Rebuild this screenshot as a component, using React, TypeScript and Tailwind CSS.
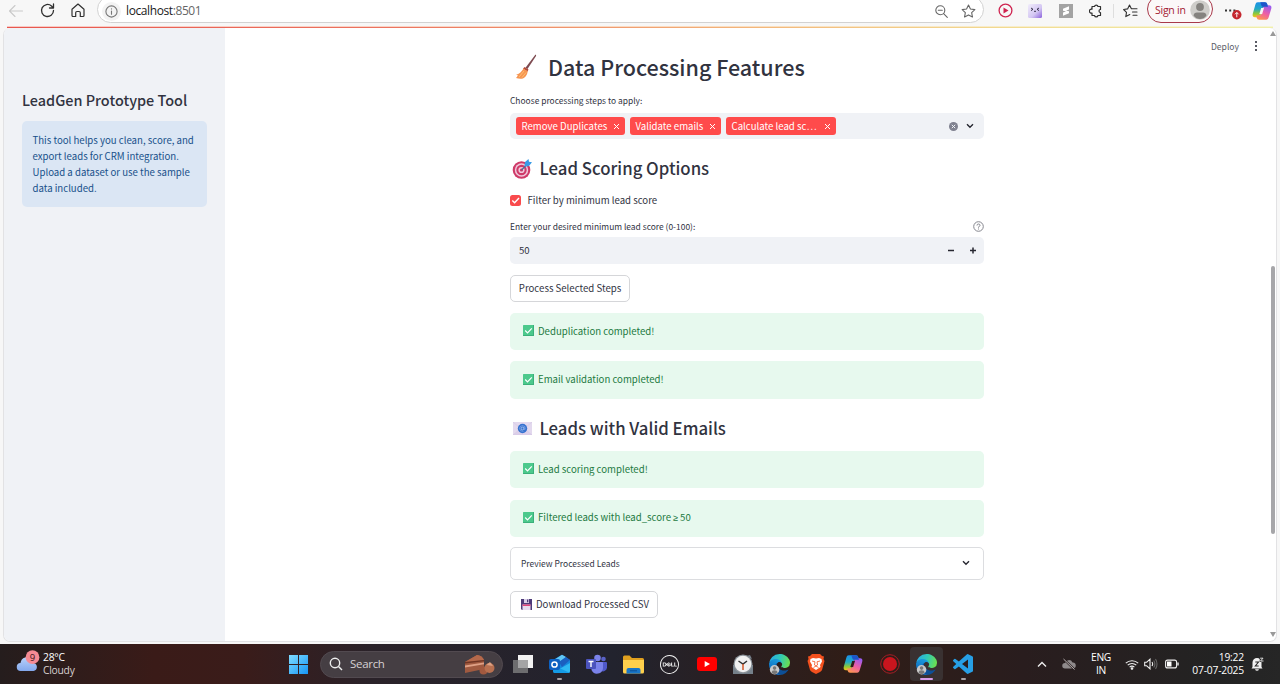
import React from "react";
import { SiDell } from "react-icons/si";

const UI = "font-['Open_Sans','Noto_Sans',sans-serif]";
const APP = "font-['Noto_Sans_CJK_SC','Noto_Sans',sans-serif]";

function Slot({ className, children }: { className: string; children?: React.ReactNode }) {
  return <div className={`flex shrink-0 items-center justify-center ${className}`}>{children}</div>;
}

function Copilot({ id, size, hole }: { id: string; size: number; hole: string }) {
  return (
    <svg width={size} height={size} viewBox="0 0 24 24">
      <defs>
        <linearGradient id={`${id}a`} x1="0.3" y1="0" x2="0.3" y2="1">
          <stop offset="0" stopColor="#1b8fe8" />
          <stop offset="0.45" stopColor="#22aac4" />
          <stop offset="0.75" stopColor="#8cc83c" />
          <stop offset="1" stopColor="#f5c518" />
        </linearGradient>
        <linearGradient id={`${id}b`} x1="0.7" y1="0" x2="0.2" y2="1">
          <stop offset="0" stopColor="#9a5cf0" />
          <stop offset="0.5" stopColor="#ee5fa5" />
          <stop offset="1" stopColor="#ff9a4a" />
        </linearGradient>
      </defs>
      <path d="M7 1.500h8.500c1.600 0 2.400 1 2.800 2.400l.9 3.100h-3.400c-1.800 0-2.800 1-3.300 2.700l-2.200 7.400c-.4 1.400-1.200 2.400-2.800 2.400H3.600C1 19.500.2 17.500 1 15L4 4.500C4.500 2.500 5.300 1.500 7 1.500z" fill={`url(#${id}a)`} />
      <path d="M17 22.500H8.500c-1.600 0-2.400-1-2.800-2.400L4.900 17.500h3.300c1.800 0 2.800-1 3.300-2.700l2.200-7.400c.4-1.400 1.200-2.400 2.800-2.400h3.900c2.600 0 3.400 2 2.600 4.500L20 19.500c-.5 2-1.300 3-3 3z" fill={`url(#${id}b)`} />
      <path d="M10 1.500h5.500c1.600 0 2.400 1 2.800 2.400l.9 3.100h-5.700c-1.400 0-2-.8-2.400-2.100z" fill="#1d55c9" />
      <path d="M11 8.500h3.400l-2.200 7H8.800z" fill={hole} />
    </svg>
  );
}

function Edge({ id }: { id: string }) {
  return (
    <svg width="21" height="21" viewBox="0 0 256 256">
      <defs>
        <linearGradient id={`${id}g`} x1="0" y1="0.3" x2="1" y2="0.5">
          <stop offset="0" stopColor="#2aa9e8" />
          <stop offset="0.5" stopColor="#2fc9b8" />
          <stop offset="1" stopColor="#6be04f" />
        </linearGradient>
        <linearGradient id={`${id}b`} x1="0.7" y1="0" x2="0.3" y2="1">
          <stop offset="0" stopColor="#1ba2e0" />
          <stop offset="1" stopColor="#0d5fb8" />
        </linearGradient>
      </defs>
      <path fill="#0d4f97" d="M231 190.500c-3.400 1.800-6.900 3.400-10.500 4.700a101.600 101.600 0 0 1-35.800 6.500c-47.200 0-88.300-32.500-88.300-74.100a31.500 31.500 0 0 1 16.400-27.300c-42.700 1.800-53.700 46.300-53.700 72.300 0 73.800 68 81.200 82.600 81.200 7.900 0 19.800-2.300 27-4.600l1.300-.4a128.300 128.300 0 0 0 66.600-52.700 4 4 0 0 0-5.600-5.600z" />
      <path fill={`url(#${id}b)`} d="M105.700 241.400a79.200 79.200 0 0 1-22.700-21.300 80.700 80.700 0 0 1 29.800-120c3.200-1.500 8.500-4.100 15.600-4a32.400 32.400 0 0 1 25.700 13 31.900 31.900 0 0 1 6.300 18.700c0-.2 24.500-79.600-80-79.600-43.900 0-80 41.700-80 78.200a130.200 130.200 0 0 0 12.100 56 128 128 0 0 0 156.400 67 75.500 75.500 0 0 1-62.800-8z" />
      <path fill={`url(#${id}g)`} d="M152.300 148.900c-.8 1-3.300 2.500-3.300 5.700 0 2.600 1.700 5.100 4.700 7.200 14.400 10 41.500 8.700 41.600 8.700a59.600 59.600 0 0 0 30.300-8.300A61.400 61.400 0 0 0 256 109.200c.3-22.400-8-37.300-11.300-43.900C223.500 23.900 177.700 0 128 0A128 128 0 0 0 0 126.200c.5-36.500 36.800-66 80-66 3.500 0 23.500.3 42 10a72.600 72.600 0 0 1 30.900 29.300c6.100 10.600 7.200 24.100 7.200 29.500s-2.700 13.300-7.800 19.900z" />
      <circle cx="68" cy="192" r="58" fill="#c9c9c9" />
      <circle cx="68" cy="172" r="22" fill="#777" />
      <path d="M30 225q4-26 38-26t38 26q-16 20-38 20t-38-20z" fill="#777" />
    </svg>
  );
}

function Toolbar() {
  const line = { fill: "none", stroke: "#303030", strokeWidth: 1.1, strokeLinecap: "round", strokeLinejoin: "round" } as const;
  return (
    <div className={`flex h-[26px] w-full shrink-0 overflow-hidden bg-[#f7f7f7] ${UI}`}>
      <div className="flex h-[21px] items-center">
        <Slot className="w-8">
          <svg width="16" height="14" viewBox="0 0 16 14" {...line} stroke="#c9c9c9"><path d="M14.500 7H1.500M7 1.500 1.500 7 7 12.500" /></svg>
        </Slot>
        <Slot className="w-[30px]">
          <svg width="15" height="15" viewBox="0 0 15 15" {...line} strokeWidth={1.3}><path d="M13.500 7.500a6 6 0 1 1-2-4.500l1.500 1.500M13.500 1v4h-4" /></svg>
        </Slot>
        <Slot className="w-[31px]">
          <svg width="14" height="15" viewBox="0 0 14 15" {...line} strokeWidth={1.2}><path d="M1 6.200 7 1l6 5.200v6.300a1 1 0 0 1-1 1H9.300V9.800A1.300 1.300 0 0 0 8 8.500H6a1.300 1.300 0 0 0-1.300 1.300v3.700H2a1 1 0 0 1-1-1z" /></svg>
        </Slot>
      </div>
      <div className="-mt-[4px] ml-[4px] flex h-[27px] w-[887px] shrink-0 items-center rounded-full border border-[#d2d2d2] bg-white pt-[3px]">
        <Slot className="w-[27px]">
          <div className="flex h-[19px] w-[19px] items-center justify-center rounded-full bg-[#f3f3f3]">
            <svg width="13" height="13" viewBox="0 0 13 13" {...line} stroke="#777"><circle cx="6.500" cy="6.500" r="5.600" /><path d="M6.500 6v3.200M6.500 3.800v.1" /></svg>
          </div>
        </Slot>
        <span className="ml-[1px] text-[12px] leading-[16px] tracking-[-0.4px] whitespace-nowrap text-[#1a1a1a]">localhost<span className="text-[#666]">:8501</span></span>
        <Slot className="ml-auto w-[27px]">
          <svg width="13" height="13" viewBox="0 0 13 13" {...line} stroke="#666"><circle cx="5.300" cy="5.300" r="4.500" /><path d="M8.600 8.600 12.300 12.300M3.300 5.300h4" /></svg>
        </Slot>
        <Slot className="mr-[1px] w-[27px]">
          <svg width="15" height="14" viewBox="0 0 15 14" {...line} stroke="#666"><path d="m7.500 1 1.950 4 4.400.6-3.200 3.050.8 4.350-3.950-2.100L3.550 13l.8-4.350L1.150 5.600l4.400-.6z" /></svg>
        </Slot>
      </div>
      <div className="ml-[6px] flex h-[21px] items-center">
        <Slot className="w-[30px]">
          <svg width="15" height="15" viewBox="0 0 15 15"><circle cx="7.500" cy="7.500" r="6.400" fill="none" stroke="#cf2450" strokeWidth="1.300" /><path d="M5.500 4.500v6l5-3z" fill="#cf2450" /></svg>
        </Slot>
        <Slot className="w-[30px]">
          <svg width="14" height="14" viewBox="0 0 14 14">
            <defs><linearGradient id="face" x1="0" y1="0" x2="1" y2="1"><stop offset="0" stopColor="#f1ecfb" /><stop offset="0.6" stopColor="#d3c6f2" /><stop offset="1" stopColor="#8b62dc" /></linearGradient></defs>
            <rect width="14" height="14" rx="1.500" fill="url(#face)" />
            <path d="m3 4 2 1.300-2 1.300M11 4 9 5.300l2 1.300M6 7.300h2" fill="none" stroke="#28233c" strokeWidth="0.900" />
          </svg>
        </Slot>
        <Slot className="w-[31px]">
          <svg width="14" height="14" viewBox="0 0 14 14"><rect width="14" height="14" fill="#a3a3a3" /><path d="m10 2.300-6 2.400v2l3 .5-3 1.200v3.300l6-2.400v-2L7 6.800l3-1.200z" fill="#fff" /></svg>
        </Slot>
        <Slot className="w-[30px]">
          <svg width="14" height="14" viewBox="0 0 14 14" {...line} strokeWidth={1.2}><path d="M3 2.500h2.500a1.800 1.800 0 0 1 3.500 0h2.500v3a1.500 1.500 0 0 0 0 3v3H9a1.800 1.800 0 0 1-3.500 0H3V9a2 2 0 1 1 0-3.800z" /></svg>
        </Slot>
        <div className="ml-[2px] h-[14px] w-px bg-[#dedede]" />
        <Slot className="ml-[2px] w-[29px]">
          <svg width="15" height="14" viewBox="0 0 15 14" {...line}><path d="M10 4.800H8.400L6.500 1 4.600 4.900l-4 .6 2.900 2.900-.7 4.200 4-2.100M10 4.800h4M9.500 8h4.500M10 11.200h4" /></svg>
        </Slot>
      </div>
      <div className="-mt-[5px] ml-[2px] flex h-[28px] w-[66px] shrink-0 items-center rounded-full border border-[#a8394a] bg-[#fbf8f8] pt-[2px] pl-[7px]">
        <span className="text-[10.500px] leading-[14px] tracking-[-0.25px] whitespace-nowrap text-[#a32033]">Sign in</span>
        <svg className="mr-[2px] ml-auto" width="20" height="20" viewBox="0 0 20 20"><circle cx="10" cy="10" r="9.800" fill="#cfcdca" /><circle cx="10" cy="7" r="3.900" fill="#85827f" /><path d="M3.500 15.500q.5-3 3.500-3h6q3 0 3.500 3-2.500 3.600-6.500 3.600t-6.500-3.600z" fill="#85827f" /></svg>
      </div>
      <Slot className="ml-[10px] h-[21px] w-[20px]">
        <svg width="20" height="20" viewBox="0 0 20 20"><path d="M2 8.500h2v2H2zM6.200 8.500h2v2h-2zM10.400 8.500h2v2h-2z" fill="#333" /><circle cx="13.800" cy="13.800" r="4.700" fill="#c4262e" /><path d="M13.800 16.300v-4.800M12 13.300l1.800-1.800 1.800 1.800" fill="none" stroke="#fff" strokeWidth="1" /></svg>
      </Slot>
      <Slot className="ml-[9px] h-[21px] w-[20px]"><Copilot id="top" size={20} hole="#f7f7f7" /></Slot>
    </div>
  );
}

function Check() {
  return (
    <svg className="mr-[4.500px] shrink-0" width="11" height="11" viewBox="0 0 11 11">
      <rect width="11" height="11" rx=".5" fill="#4cc98c" />
      <path d="M0 10.500h11M10.500 0v11" stroke="#3bb07a" />
      <path d="M2.200 5.500 4.500 7.800 8.800 3.300" fill="none" stroke="#fff" strokeWidth="1.200" />
    </svg>
  );
}

function Alert({ className, children }: { className: string; children: React.ReactNode }) {
  return (
    <div className={`flex shrink-0 items-center rounded-[5px] bg-[#e7f9ee] pb-[2px] pl-[12.500px] text-[9.620px] leading-[14px] whitespace-nowrap text-[#1c7a3f] ${className}`}>
      <Check /><span>{children}</span>
    </div>
  );
}

function Tag({ className, children }: { className: string; children: React.ReactNode }) {
  return (
    <div className={`flex h-[18.500px] shrink-0 items-center rounded-[3px] bg-[#ff4b4b] pb-[1px] pl-[5.500px] text-[9.650px] leading-[14px] whitespace-nowrap text-white ${className}`}>
      {children}
      <svg className="mt-px mr-[5px] ml-auto" width="7" height="7" viewBox="0 0 7 7"><path d="m1 1 5 5M6 1 1 6" stroke="#fff" strokeWidth="1" /></svg>
    </div>
  );
}

function Chevron() {
  return <svg width="8" height="6" viewBox="0 0 8 6"><path d="m1 1.200 3 3 3-3" fill="none" stroke="#262730" strokeWidth="1.400" /></svg>;
}

function Sidebar() {
  return (
    <aside className="flex w-[221px] shrink-0 flex-col bg-[#f0f2f6] pl-[18px]">
      <h2 className="mt-[62px] h-[20px] text-[14.450px] leading-[20px] font-medium whitespace-nowrap text-[#31333f]">LeadGen Prototype Tool</h2>
      <div className="mt-[11px] h-[86px] w-[185px] rounded-[5px] bg-[#dbe6f4] pt-[10.500px] pl-[10.500px] text-[9.650px] leading-[16.200px] whitespace-nowrap text-[#17508a]">
        <p>This tool helps you clean, score, and</p>
        <p>export leads for CRM integration.</p>
        <p>Upload a dataset or use the sample</p>
        <p>data included.</p>
      </div>
    </aside>
  );
}

function Content() {
  return (
    <div className="ml-[285px] flex w-[474px] shrink-0 flex-col text-[#31333f]">
      <h1 className="mt-[19px] flex h-[40px] shrink-0 items-center pl-[5px] text-[21.500px] leading-[40px] font-medium whitespace-nowrap">
        <svg className="mr-[11px]" width="22" height="26" viewBox="0 0 22 26">
          <path d="M20.500.5q1 .5.5 1.500l-8.500 13-2-1.300z" fill="#7d4a50" />
          <path d="m9.500 13 4 2.600-1 2-4.500-2.800z" fill="#b04a3c" />
          <path d="M8.500 14.200q2 2.300 4.300 2.800-.8 5.500-4.800 7.500-3.500.7-7-.5 1.200-1.200 1.800-3-1 .2-1.600-.3 5.300-1.700 7.300-6.500z" fill="#f69552" />
          <path d="m9 17-5 6M11 18.500l-4 5" stroke="#ffc06d" strokeWidth="1" />
        </svg>
        Data Processing Features
      </h1>
      <div className="mt-[6px] h-[14px] shrink-0 text-[8.430px] leading-[14px] whitespace-nowrap">Choose processing steps to apply:</div>
      <div className="mt-[6px] flex h-[26px] shrink-0 items-center rounded-[5px] bg-[#f0f2f6] pl-[6px]">
        <Tag className="w-[109px]">Remove Duplicates</Tag>
        <Tag className="ml-[5px] w-[91px]">Validate emails</Tag>
        <Tag className="ml-[5px] w-[110px]">Calculate lead sc…</Tag>
        <svg className="ml-auto" width="9" height="9" viewBox="0 0 9 9"><circle cx="4.500" cy="4.500" r="4.500" fill="#808290" /><path d="m2.800 2.800 3.400 3.400M6.200 2.800 2.800 6.200" stroke="#f0f2f6" strokeWidth="1" /></svg>
        <div className="mr-[10px] ml-[8px]"><Chevron /></div>
      </div>
      <h2 className="mt-[15px] flex h-[30px] shrink-0 items-center pb-[1px] pl-[2px] text-[16.750px] leading-[29px] font-medium whitespace-nowrap">
        <svg className="mr-[7.500px]" width="20" height="20" viewBox="0 0 20 20">
          <circle cx="9.500" cy="11" r="8.800" fill="#cf3a68" />
          <circle cx="9.500" cy="11" r="6.700" fill="#f0c9dc" />
          <circle cx="9.500" cy="11" r="5.200" fill="#cf3a68" />
          <circle cx="9.500" cy="11" r="3.100" fill="#f0c9dc" />
          <circle cx="9.500" cy="11" r="1.600" fill="#cf3a68" />
          <path d="m9.500 11 6-6" stroke="#4c6f96" strokeWidth="1.200" />
          <path d="m12.500 7 .5-4L16.500 0l.5 2.800 3 .4-3 3.800-3.500.5z" fill="#3a9be6" />
        </svg>
        Lead Scoring Options
      </h2>
      <div className="mt-[6px] flex h-[20px] shrink-0 items-center text-[9.620px] leading-[14px] whitespace-nowrap">
        <svg className="mr-[6.500px]" width="11" height="11" viewBox="0 0 11 11"><rect width="11" height="11" rx="2.500" fill="#f94b4d" /><path d="m2.300 5.500 2.300 2.300L9 3" fill="none" stroke="#fff" strokeWidth="1.400" /></svg>
        Filter by minimum lead score
      </div>
      <div className="mt-[9px] flex h-[14px] shrink-0 items-center justify-between text-[8.430px] leading-[14px] whitespace-nowrap">
        Enter your desired minimum lead score (0-100):
        <svg width="11" height="11" viewBox="0 0 11 11" fill="none" stroke="#85868e" strokeWidth="1"><circle cx="5.500" cy="5.500" r="4.800" /><path d="M4 4.500q0-1.500 1.500-1.500T7 4.400q0 .9-1.500 1.500v.7M5.500 7.500v1" /></svg>
      </div>
      <div className="mt-[4px] flex h-[27px] shrink-0 items-center rounded-[5px] bg-[#f0f2f6] pl-[9px] text-[9.600px]">
        50
        <svg className="mr-[8.500px] ml-auto" width="29" height="7" viewBox="0 0 29 7"><path d="M1 3.500h6M23 3.500h6M26 .5v6" stroke="#262730" strokeWidth="1.500" /></svg>
      </div>
      <button className="mt-[11px] flex h-[27px] w-[120px] shrink-0 items-center justify-center rounded-[5px] border border-[#d5d6d9] pb-[2px] text-[9.650px] leading-[14px] whitespace-nowrap">Process Selected Steps</button>
      <Alert className="mt-[11px] h-[37px]">Deduplication completed!</Alert>
      <Alert className="mt-[11px] h-[38px]">Email validation completed!</Alert>
      <h2 className="mt-[14px] flex h-[30px] shrink-0 items-center pl-[3px] text-[16.750px] leading-[30px] font-medium whitespace-nowrap">
        <svg className="mr-[7.500px]" width="19" height="13" viewBox="0 0 19 13">
          <rect width="19" height="13" fill="#e3d9ee" />
          <path d="M0 13 7 7h5l7 6zM0 0l7 6M19 0l-7 6" fill="#dccfe9" stroke="#d3c6e4" strokeWidth=".6" />
          <circle cx="9.500" cy="6.500" r="4.700" fill="#3672cf" />
          <circle cx="9.500" cy="6.500" r="1.400" fill="none" stroke="#bcd0f3" strokeWidth=".7" />
          <path d="M10.900 5v2q.3 1 1.300.2.6-3.400-2.700-3.600-3 .3-3 3 .5 3 4 2.800" fill="none" stroke="#9dbaf0" strokeWidth=".5" />
        </svg>
        Leads with Valid Emails
      </h2>
      <Alert className="mt-[8px] h-[37px]">Lead scoring completed!</Alert>
      <Alert className="mt-[12px] h-[37px]">Filtered leads with lead_score <span className="font-['Noto_Sans',sans-serif] text-[9px] tracking-[-0.2px]">≥</span> 50</Alert>
      <div className="mt-[10px] flex h-[33px] shrink-0 items-center justify-between rounded-[5px] border border-[#dcdde0] pr-[13.500px] pb-[1px] pl-[10px] text-[8.480px] whitespace-nowrap">
        Preview Processed Leads<Chevron />
      </div>
      <button className="mt-[11px] flex h-[27px] w-[148px] shrink-0 items-center rounded-[5px] border border-[#d5d6d9] pb-[1px] pl-[10px] text-[9.620px] leading-[14px] whitespace-nowrap">
        <svg className="mr-[4px]" width="11" height="11" viewBox="0 0 11 11"><path d="M0 0h11v11H1l-1-1z" fill="#4c3a78" /><path d="M3 0h5v4H3z" fill="#d8cde8" /><path d="M6 .6h1.300v2.700H6z" fill="#4c3a78" /><path d="M1.500 5.500h8V11h-8z" fill="#e6dcf0" /><path d="M1.500 5.500h8v1.500h-8z" fill="#e0457b" /></svg>
        Download Processed CSV
      </button>
    </div>
  );
}

function Page() {
  return (
    <div className="flex h-[618px] shrink-0 flex-col bg-[#f7f7f7] pr-[3px] pl-[3px]">
      <div className="mx-[4px] h-px shrink-0 bg-[linear-gradient(90deg,#f8c9c4_0%,#f9d2c4_30%,#f9dfc0_60%,#f7edcb_80%,#f6f5d4_100%)]" />
      <div className="mx-[4px] h-px shrink-0 bg-[linear-gradient(90deg,#e8574f_0%,#ec7360_30%,#f3b87c_60%,#f2dc92_80%,#f0efac_100%)]" />
      <div className={`flex h-[614px] w-full overflow-hidden rounded-[7px] border-x border-b border-[#e2e2e4] bg-white ${APP}`}>
        <Sidebar />
        <Content />
        <div className="ml-auto flex h-[36px] items-center text-[8.600px] text-[#5a5c66]">
          Deploy
          <svg className="mr-[11px] ml-[15px]" width="4" height="12" viewBox="0 0 4 12" fill="#31333f"><circle cx="2" cy="2" r="1.100" /><circle cx="2" cy="6" r="1.100" /><circle cx="2" cy="10" r="1.100" /></svg>
        </div>
        <div className="flex w-[7px] shrink-0 flex-col items-center">
          <svg className="mt-[3px] shrink-0" width="6" height="5" viewBox="0 0 6 5"><path d="M3 0 6 5H0z" fill="#999" /></svg>
          <div className="mt-[230px] h-[268px] w-[4px] shrink-0 rounded-full bg-[#a6a6a9]" />
          <svg className="mt-auto mb-[4px] shrink-0" width="6" height="5" viewBox="0 0 6 5"><path d="M0 0h6L3 5z" fill="#999" /></svg>
        </div>
      </div>
    </div>
  );
}

function TaskSlot({ children, mark, active }: { children: React.ReactNode; mark?: string; active?: boolean }) {
  return (
    <div className="flex h-[40px] w-[36.650px] shrink-0 items-center justify-center">
      <div className={`relative flex h-[34px] w-[33px] items-center justify-center rounded-[4px] ${active ? "bg-[#393131]" : ""}`}>
        {children}
        {mark && <div className={`absolute bottom-[1px] h-[2px] rounded-full ${mark}`} />}
      </div>
    </div>
  );
}

function Taskbar() {
  return (
    <div className={`flex h-[40px] w-full shrink-0 items-center bg-[linear-gradient(90deg,#251d1d_0%,#3a1b18_12%,#3a1c1a_19%,#2a2229_29%,#22232e_48%,#2a1f20_58%,#301d17_66%,#291d1e_80%,#232323_95%,#262626_100%)] text-white ${UI}`}>
      <svg className="ml-[16px] shrink-0" width="25" height="29" viewBox="0 -4 25 29">
        <defs><linearGradient id="cloud" x1="0" y1="0" x2="0" y2="1"><stop offset="0" stopColor="#b9d2fa" /><stop offset="1" stopColor="#83a8ec" /></linearGradient></defs>
        <path d="M5 17a4 4 0 0 1-.5-8A6.500 6.500 0 0 1 16 5.500q1.500 1.500 2 3.700a4 4 0 0 1-.5 7.800z" fill="url(#cloud)" />
        <circle cx="16.500" cy="3.200" r="6.900" fill="#f58a94" />
        <text x="16.500" y="6.700" fontSize="9.500" textAnchor="middle" fill="#3a1418">9</text>
      </svg>
      <div className="ml-[2px] w-[60px] text-[10.300px] leading-[13.500px] tracking-[-0.25px]">
        <div>28°C</div><div className="text-[#d8d0d0]">Cloudy</div>
      </div>
      <svg className="ml-[186px] shrink-0" width="19" height="19" viewBox="0 0 19 19">
        <defs><linearGradient id="win" x1="0" y1="0" x2="1" y2="1"><stop offset="0" stopColor="#7fdcff" /><stop offset="1" stopColor="#1695f5" /></linearGradient></defs>
        <path d="M0 0h9v9H0zM10 0h9v9h-9zM0 10h9v9H0zM10 10h9v9h-9z" fill="url(#win)" />
      </svg>
      <div className="ml-[12px] flex h-[27px] w-[183px] shrink-0 items-center rounded-full border border-[#524a50] bg-[#453e43] pl-[8px]">
        <svg width="14" height="14" viewBox="0 0 14 14" fill="none" stroke="#eee" strokeWidth="1.400"><circle cx="6" cy="6" r="4.700" /><path d="m9.500 9.500 3.500 3.500" /></svg>
        <span className="ml-[7px] text-[11.500px] leading-[16px] tracking-[-0.3px] text-[#d5d0d3]">Search</span>
        <svg className="mr-[7px] ml-auto" width="31" height="21" viewBox="0 0 31 21">
          <path d="M1 8 13 1q5 .5 7 5v9L1 19z" fill="#a05a40" />
          <path d="M1 8 13 1q5 .5 7 5z" fill="#b5694b" />
          <path d="m1 11.500 19-3v1.800l-19 3.200z" fill="#dfa085" />
          <path d="m1 8 19-2v1.300L1 9.500z" fill="#703524" />
          <circle cx="19.500" cy="16.500" r="4" fill="#a2593f" />
          <circle cx="25.500" cy="14" r="5" fill="#b87050" />
          <path d="m22.500 11 3.500-3 3 4z" fill="#dda284" />
        </svg>
      </div>
      <div className="ml-[2px] flex">
        <TaskSlot><svg width="20" height="18" viewBox="0 0 20 18"><path d="M5 0h15v13H5z" fill="#f2f2f2" /><path d="M0 5h15v13H0z" fill="#6d6d6f" /><path d="M5 5h10v8H5z" fill="#a4a4a5" /></svg></TaskSlot>
        <TaskSlot mark="w-[5px] bg-[#a9a3a6]">
          <svg width="22" height="20" viewBox="0 0 22 20"><path d="M4 6 13 .7 21 6v11q0 2-2 2H6q-2 0-2-2z" fill="#1587dc" /><path d="M5 6 13 .7 17 3 9 9z" fill="#61c7f5" /><path d="m10 8 7-5 4 3-8 7z" fill="#1b5fc0" /><path d="m5 18 16-9v8q0 2-2 2H7q-2 0-2-1z" fill="#2fb9f3" /><path d="M4 11l17 8H6q-2 0-2-2z" fill="#149be6" /><rect y="5" width="11" height="11" rx="2" fill="#0c61c2" /><circle cx="5.500" cy="10.500" r="2.600" fill="none" stroke="#fff" strokeWidth="1.500" /></svg>
        </TaskSlot>
        <TaskSlot>
          <svg width="21" height="20" viewBox="0 0 21 20"><circle cx="17.500" cy="5" r="2.300" fill="#5a62c8" /><circle cx="11.500" cy="4" r="3.300" fill="#7b83eb" /><path d="M14 8h6q1 0 1 1v4.500a4 4 0 0 1-6 3.300z" fill="#5059c9" /><path d="M6 8h10q1 0 1 1v5a6 6 0 0 1-11.500 2z" fill="#7b83eb" /><rect y="5" width="10" height="10" rx="1" fill="#4b53bc" /><path d="M2.500 7.500h5M5 7.500v5.500" stroke="#fff" strokeWidth="1.400" /></svg>
        </TaskSlot>
        <TaskSlot><svg width="21" height="19" viewBox="0 0 21 19"><path d="M0 2q0-1.500 1.500-1.500h5L9 3h10.500Q21 3 21 4.500V9H0z" fill="#e0a01f" /><path d="M0 5h21v12q0 1.500-1.500 1.500h-18Q0 18.500 0 17z" fill="#ffd04c" /><path d="M3.500 18.500V15q0-2 2-2h10q2 0 2 2v3.500z" fill="#1976c8" /><path d="M7 15.800h7" stroke="#0c4f93" /></svg></TaskSlot>
        <TaskSlot><SiDell size={19} color="#efefef" /></TaskSlot>
        <TaskSlot><svg width="20" height="14" viewBox="0 0 20 14"><rect width="20" height="14" rx="3" fill="#f00" /><path d="M7.700 4v6l5.300-3z" fill="#fff" /></svg></TaskSlot>
        <TaskSlot><svg width="20" height="20" viewBox="0 0 20 20"><path d="M0 11h20v9H0zM13 2l4-1 2 4z" fill="#75808a" /><circle cx="10" cy="10" r="9.500" fill="#8b9299" /><circle cx="10" cy="10" r="8.300" fill="#f1f1f1" /><path d="m5.500 7 4.500 3 4-3" fill="none" stroke="#333" strokeWidth="1.500" /><path d="M10 10v6" stroke="#d5582a" strokeWidth="1.500" /></svg></TaskSlot>
        <TaskSlot><Edge id="e1" /></TaskSlot>
        <TaskSlot><svg width="18" height="20" viewBox="0 0 18 20"><path d="m5 0-2 2L1 2.500 1.500 5 .5 7 3 16q.5 1 2 2l4 2 4-2q1.500-1 2-2l2.500-9-1-2 .5-2.500-2-.5-2-2z" fill="#f4511e" /><path d="m6 4-2.500 1L3 7.500 5 11l-.5 2L9 16l4.500-3-.5-2 2-3.500L14.500 5 12 4 9 4.500z" fill="#fff" /><path d="m5 7 3 .8-.5 3.200L9 12l1.500-1L10 7.800l3-.8M6.500 13.500 9 12l2.500 1.500" fill="none" stroke="#f4511e" strokeWidth=".8" /></svg></TaskSlot>
        <TaskSlot><Copilot id="task" size={20} hole="#301d1b" /></TaskSlot>
        <TaskSlot><svg width="20" height="20" viewBox="0 0 20 20"><circle cx="10" cy="10" r="9.300" fill="none" stroke="#a51d25" strokeWidth="1" /><circle cx="10" cy="10" r="7" fill="#c9151e" /></svg></TaskSlot>
        <TaskSlot active mark="w-[13px] bg-[#d69be8]"><Edge id="e2" /></TaskSlot>
        <TaskSlot mark="w-[5px] bg-[#a9a3a6]"><svg width="20" height="20" viewBox="0 0 24 24"><path fill="#279fe5" d="M23.150 2.587L18.210.210a1.494 1.494 0 0 0-1.705.290l-9.460 8.630-4.120-3.128a.999.999 0 0 0-1.276.057L.327 7.261A1 1 0 0 0 .326 8.740L3.899 12 .326 15.260a1 1 0 0 0 .001 1.479L1.650 17.940a.999.999 0 0 0 1.276.057l4.120-3.128 9.460 8.630a1.492 1.492 0 0 0 1.704.290l4.942-2.377A1.500 1.500 0 0 0 24 20.060V3.939a1.500 1.500 0 0 0-.850-1.352zm-5.146 14.861L10.826 12l7.178-5.448v10.896z" /></svg></TaskSlot>
      </div>
      <svg className="ml-auto shrink-0" width="10" height="7" viewBox="0 0 10 7"><path d="m1 5.500 4-4 4 4" fill="none" stroke="#eee" strokeWidth="1.400" /></svg>
      <svg className="ml-[15px] shrink-0" width="14" height="12" viewBox="0 0 14 12"><path d="M3 10.500A2.700 2.700 0 0 1 3 5a4 4 0 0 1 7.500-.5 3 3 0 0 1 .5 6z" fill="#8f8a8b" /><path d="m1.500 1 11 10.500" stroke="#2a1f20" strokeWidth="2" /><path d="m1.500 1 11 10.500" stroke="#c8c4c4" strokeWidth=".9" /></svg>
      <div className="ml-[14px] w-[22px] shrink-0 text-center text-[10.300px] leading-[13.500px] tracking-[-0.35px]"><div>ENG</div><div>IN</div></div>
      <svg className="ml-[13px] shrink-0" width="14" height="11" viewBox="0 0 14 11" fill="none" stroke="#eee" strokeWidth="1.100"><path d="M.8 4.200a9 9 0 0 1 12.400 0M2.700 6.200a6.200 6.200 0 0 1 8.600 0M4.600 8.200a3.500 3.500 0 0 1 4.800 0" /><circle cx="7" cy="9.500" r=".8" fill="#eee" /></svg>
      <svg className="ml-[5px] shrink-0" width="14" height="12" viewBox="0 0 14 12" fill="none" stroke="#eee" strokeWidth="1.100"><path d="M.7 4.200h2L6 1.200v9.600l-3.300-3h-2zM8 4q1.300 2 0 4" /><path d="M9.700 2.500q2.400 3.500 0 7M11.500 1q3 5 0 10" stroke="#666" /></svg>
      <svg className="ml-[7px] shrink-0" width="14" height="10" viewBox="0 0 14 10"><rect x=".6" y="1.100" width="11" height="7.800" rx="2" fill="none" stroke="#eee" strokeWidth="1.100" /><rect x="2" y="2.500" width="4.500" height="5" fill="#fff" /><path d="M13 3.500v3" stroke="#eee" strokeWidth="1.400" /></svg>
      <div className="ml-[10px] w-[55px] shrink-0 text-right text-[10.300px] leading-[13.500px] tracking-[-0.2px] whitespace-nowrap"><div>19:22</div><div>07-07-2025</div></div>
      <svg className="mr-[16px] ml-[7px] shrink-0" width="13" height="14" viewBox="0 0 13 14"><path d="M1.500 10V5.500a4.500 4.500 0 0 1 9 0V10l1 1.500H.5zM4 12.300h4q-.5 1.500-2 1.500t-2-1.500z" fill="#f1f1f1" /><path d="M4.300 5h3.200l-3.200 4h3.400" fill="none" stroke="#262626" strokeWidth="1.100" /><path d="M8.700 0H13v5H8.700z" fill="#262626" /><path d="M9.200 1.200h2.800L9.500 4h3" fill="none" stroke="#eee" strokeWidth=".9" /></svg>
    </div>
  );
}

export default function App() {
  return (
    <div className="flex h-[684px] w-[1280px] flex-col overflow-hidden bg-[#f7f7f7]">
      <Toolbar />
      <Page />
      <Taskbar />
    </div>
  );
}
